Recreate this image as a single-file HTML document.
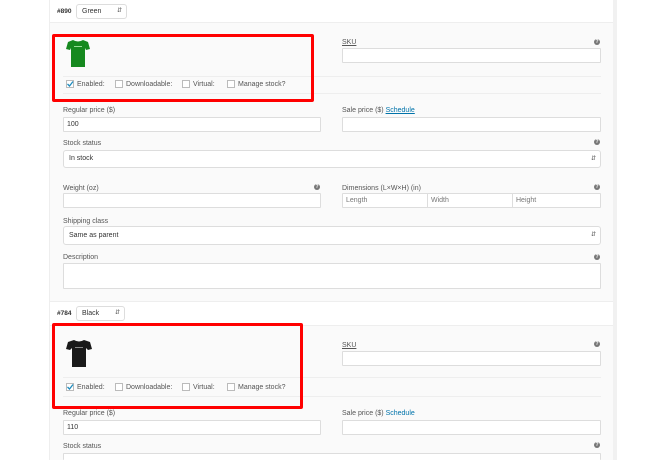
<!DOCTYPE html>
<html><head><meta charset="utf-8"><style>
*{margin:0;padding:0;box-sizing:border-box}
body{width:659px;height:476px;background:#fff;position:relative;overflow:hidden;font-family:"Liberation Sans",sans-serif;font-size:7px;color:#444}
.a{position:absolute}
.in{position:absolute;background:#fff;border:1px solid #ddd;border-radius:1px}
.lb{position:absolute;font-size:7px;color:#555;white-space:nowrap}
.hp{position:absolute;width:6px;height:6px;border-radius:50%;background:#777;color:#fff;font-size:5px;line-height:6px;text-align:center;font-weight:bold}
.cb{position:absolute;width:8px;height:8px;border:1px solid #bbb;background:#fff}
.red{position:absolute;border:3px solid #f00;border-radius:2px}
.hl{position:absolute;height:1px;background:#eee}
.sel{position:absolute;background:#fff;border:1px solid #ddd;border-radius:3px;font-size:7px;color:#333;padding-left:5px}
.arr{position:absolute;right:4px;font-size:6px;color:#555}
.tx{position:absolute;font-size:7px;color:#333;white-space:nowrap}
</style></head><body>
<div class="a" style="left:49px;top:0;width:564px;height:460px;background:#fafafa;border-left:1px solid #eee"></div>
<div class="a" style="left:613px;top:0;width:4px;height:460px;background:#f1f1f1"></div>
<div class="a" style="left:50px;top:0;width:563px;height:23px;background:#fff;border-bottom:1px solid #eee"></div>
<div class="tx" style="left:57px;top:8px;font-size:6.5px;font-weight:bold;color:#333">#890</div>
<div class="sel" style="left:76px;top:4px;width:51px;height:15px;line-height:13px">Green<span class="arr">&#8693;</span></div>
<svg class="a" style="left:64px;top:37px" width="28" height="32" viewBox="0 0 28 32"><path d="M9 3 L4 5 L2 12 L6 13 L7 11 L7 30 L21 30 L21 11 L22 13 L26 12 L24 5 L19 3 Q14 6 9 3Z" fill="#16891f"/><rect x="10" y="9" width="8" height="1" fill="#9d9"/></svg>
<div class="hl" style="left:63px;top:76px;width:538px"></div>
<div class="hl" style="left:63px;top:93px;width:538px"></div>
<div class="cb" style="left:66px;top:80px"><svg width="8" height="8" style="position:absolute;left:-1px;top:-1px"><path d="M1.5 4 L3.5 6 L7 1.5" stroke="#1e8cbe" stroke-width="1.3" fill="none"/></svg></div>
<div class="lb" style="left:77px;top:81px">Enabled:</div>
<div class="cb" style="left:115px;top:80px"></div><div class="lb" style="left:126px;top:81px">Downloadable:</div>
<div class="cb" style="left:182px;top:80px"></div><div class="lb" style="left:193px;top:81px">Virtual:</div>
<div class="cb" style="left:227px;top:80px"></div><div class="lb" style="left:238px;top:81px">Manage stock?</div>
<div class="red" style="left:52px;top:34px;width:262px;height:68px"></div>
<div class="lb" style="left:342px;top:39px;text-decoration:underline">SKU</div><div class="hp" style="left:594px;top:39px">?</div>
<div class="in" style="left:342px;top:48px;width:259px;height:15px"></div>
<div class="lb" style="left:63px;top:107px">Regular price ($)</div>
<div class="in" style="left:63px;top:117px;width:258px;height:15px"></div><div class="tx" style="left:67px;top:121px">100</div>
<div class="lb" style="left:342px;top:107px">Sale price ($) <span style="color:#0073aa;text-decoration:underline">Schedule</span></div>
<div class="in" style="left:342px;top:117px;width:259px;height:15px"></div>
<div class="lb" style="left:63px;top:140px">Stock status</div><div class="hp" style="left:594px;top:139px">?</div>
<div class="sel" style="left:63px;top:150px;width:538px;height:18px;line-height:16px">In stock<span class="arr">&#8693;</span></div>
<div class="lb" style="left:63px;top:185px">Weight (oz)</div><div class="hp" style="left:314px;top:184px">?</div>
<div class="in" style="left:63px;top:193px;width:258px;height:15px"></div>
<div class="lb" style="left:342px;top:185px">Dimensions (L×W×H) (in)</div><div class="hp" style="left:594px;top:184px">?</div>
<div class="in" style="left:342px;top:193px;width:86px;height:15px"></div><div class="lb" style="left:346px;top:197px;color:#777">Length</div>
<div class="in" style="left:427px;top:193px;width:86px;height:15px"></div><div class="lb" style="left:431px;top:197px;color:#777">Width</div>
<div class="in" style="left:512px;top:193px;width:89px;height:15px"></div><div class="lb" style="left:516px;top:197px;color:#777">Height</div>
<div class="lb" style="left:63px;top:218px">Shipping class</div>
<div class="sel" style="left:63px;top:226px;width:538px;height:19px;line-height:17px">Same as parent<span class="arr">&#8693;</span></div>
<div class="lb" style="left:63px;top:254px">Description</div><div class="hp" style="left:594px;top:254px">?</div>
<div class="in" style="left:63px;top:263px;width:538px;height:26px"></div>
<div class="a" style="left:50px;top:301px;width:563px;height:25px;background:#fff;border-top:1px solid #eee;border-bottom:1px solid #eee"></div>
<div class="tx" style="left:57px;top:310px;font-size:6.5px;font-weight:bold;color:#333">#784</div>
<div class="sel" style="left:76px;top:306px;width:49px;height:15px;line-height:13px">Black<span class="arr">&#8693;</span></div>
<svg class="a" style="left:64px;top:338px" width="30" height="31" viewBox="0 0 30 31"><path d="M10 2 L4 4 L2 11 L6 12 L8 10 L8 29 L22 29 L22 10 L24 12 L28 11 L26 4 L20 2 Q15 5 10 2Z" fill="#1a1a1a"/><rect x="11" y="9" width="8" height="1" fill="#888"/></svg>
<div class="hl" style="left:63px;top:377px;width:538px"></div>
<div class="hl" style="left:63px;top:396px;width:538px"></div>
<div class="cb" style="left:66px;top:383px"><svg width="8" height="8" style="position:absolute;left:-1px;top:-1px"><path d="M1.5 4 L3.5 6 L7 1.5" stroke="#1e8cbe" stroke-width="1.3" fill="none"/></svg></div>
<div class="lb" style="left:77px;top:384px">Enabled:</div>
<div class="cb" style="left:115px;top:383px"></div><div class="lb" style="left:126px;top:384px">Downloadable:</div>
<div class="cb" style="left:182px;top:383px"></div><div class="lb" style="left:193px;top:384px">Virtual:</div>
<div class="cb" style="left:227px;top:383px"></div><div class="lb" style="left:238px;top:384px">Manage stock?</div>
<div class="red" style="left:52px;top:323px;width:251px;height:86px"></div>
<div class="lb" style="left:342px;top:342px;text-decoration:underline">SKU</div><div class="hp" style="left:594px;top:341px">?</div>
<div class="in" style="left:342px;top:351px;width:259px;height:15px"></div>
<div class="lb" style="left:63px;top:410px">Regular price ($)</div>
<div class="in" style="left:63px;top:420px;width:258px;height:15px"></div><div class="tx" style="left:67px;top:424px">110</div>
<div class="lb" style="left:342px;top:410px">Sale price ($) <span style="color:#0073aa">Schedule</span></div>
<div class="in" style="left:342px;top:420px;width:259px;height:15px"></div>
<div class="lb" style="left:63px;top:443px">Stock status</div><div class="hp" style="left:594px;top:442px">?</div>
<div class="in" style="left:63px;top:453px;width:538px;height:7px;border-bottom:none"></div>
</body></html>
